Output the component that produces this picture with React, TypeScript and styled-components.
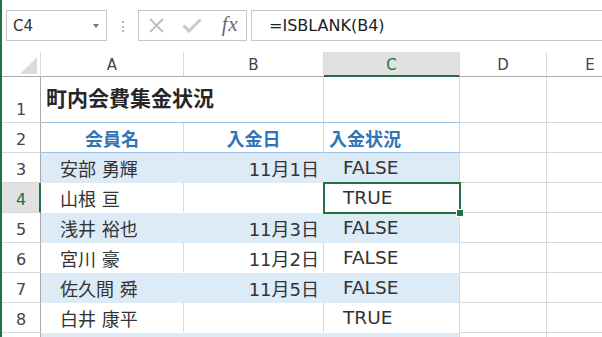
import React from 'react';
import styled, { createGlobalStyle, css } from 'styled-components';

const GlobalStyle = createGlobalStyle`
  html, body {
    margin: 0;
    padding: 0;
    background: #fff;
  }
  body {
    font-family: 'DejaVu Sans', 'Noto Sans CJK JP', sans-serif;
  }
`;

const GREEN = '#217346';
const GRID = '#d9d9d9';
const HEAD_LINE = '#ababab';
const BAND = '#ddebf7';
const BLUE_LINE = '#9bc2e6';

const Window = styled.div`
  width: 600px;
  height: 337px;
  overflow: hidden;
  border-left: 2px solid ${GREEN};
  background: #fff;
`;

const FormulaBar = styled.div`
  display: flex;
  align-items: flex-start;
  height: 52px;
  box-sizing: border-box;
  padding: 10px 0 0 4px;
`;

const NameBox = styled.div`
  width: 101px;
  height: 31px;
  box-sizing: border-box;
  border: 1px solid #c6c6c6;
  display: flex;
  align-items: center;
  justify-content: space-between;
  padding: 0 7px 0 6px;
  font-size: 15px;
  color: #333;
`;

const DropArrow = styled.span`
  width: 0;
  height: 0;
  border-left: 3.5px solid transparent;
  border-right: 3.5px solid transparent;
  border-top: 4px solid #777;
  margin-top: 1px;
`;

const Grip = styled.div`
  display: flex;
  flex-direction: column;
  gap: 2.5px;
  margin: 11px 14px 0 15px;
`;

const GripDot = styled.span`
  width: 2px;
  height: 2px;
  background: #b4b4b4;
`;

const FxBox = styled.div`
  width: 109px;
  height: 31px;
  box-sizing: border-box;
  border: 1px solid #c6c6c6;
  display: flex;
  align-items: center;
  padding: 0 8px 0 9px;
  gap: 17px;
`;

const FxLabel = styled.span`
  font-family: 'Liberation Serif', 'DejaVu Serif', serif;
  font-style: italic;
  font-size: 21px;
  color: #6a6a6a;
  margin-left: auto;
  letter-spacing: 0.5px;
  line-height: 1;
  margin-top: -2px;
`;

const FormulaInput = styled.div`
  flex: 1;
  height: 31px;
  box-sizing: border-box;
  border: 1px solid #c6c6c6;
  border-right: none;
  margin-left: 4px;
  display: flex;
  align-items: center;
  padding-left: 17px;
  font-size: 16px;
  color: #222;
`;

const Sheet = styled.div`
  display: grid;
  grid-template-columns: 39px 143px 140px 136px 87px 87px;
  grid-template-rows: 25px 46px repeat(9, 30px);
`;

const Corner = styled.div`
  box-sizing: border-box;
  border-right: 1px solid ${GRID};
  border-bottom: 1px solid ${HEAD_LINE};
  display: flex;
  align-items: flex-end;
  justify-content: flex-end;
  padding: 0 3px 2px 0;
`;

const CornerTriangle = styled.span`
  width: 0;
  height: 0;
  border-left: 17px solid transparent;
  border-bottom: 17px solid #dcdcdc;
`;

const ColHead = styled.div<{ $selected?: boolean }>`
  box-sizing: border-box;
  display: flex;
  align-items: center;
  justify-content: center;
  font-size: 15px;
  color: #444;
  border-right: 1px solid ${GRID};
  border-bottom: 1px solid ${HEAD_LINE};
  padding-top: 1px;
  ${(p) =>
    p.$selected &&
    css`
      background: #e1e1e1;
      color: ${GREEN};
      border-bottom: 2px solid ${GREEN};
      padding-top: 2px;
    `}
`;

const RowHead = styled.div<{ $selected?: boolean }>`
  box-sizing: border-box;
  display: flex;
  align-items: flex-end;
  justify-content: center;
  padding-bottom: 3px;
  font-size: 16px;
  color: #444;
  border-right: 1px solid ${HEAD_LINE};
  border-bottom: 1px solid ${GRID};
  ${(p) =>
    p.$selected &&
    css`
      background: #e1e1e1;
      color: ${GREEN};
      border-right: 2px solid ${GREEN};
      padding-left: 1px;
    `}
`;

type HLine = 'grid' | 'blue' | 'none';

const Cell = styled.div<{
  $band?: boolean;
  $vline?: boolean;
  $hline?: HLine;
  $align?: 'left' | 'center' | 'right';
  $span?: number;
}>`
  position: relative;
  box-sizing: border-box;
  display: flex;
  align-items: center;
  font-size: 18px;
  color: #333;
  white-space: nowrap;
  background: ${(p) => (p.$band ? BAND : '#fff')};
  border-right: 1px solid ${(p) => (p.$vline === false ? 'transparent' : GRID)};
  border-bottom: 1px solid
    ${(p) =>
      p.$hline === 'blue' ? BLUE_LINE : p.$hline === 'none' ? 'transparent' : GRID};
  justify-content: ${(p) =>
    p.$align === 'right' ? 'flex-end' : p.$align === 'center' ? 'center' : 'flex-start'};
  ${(p) => p.$span && css`grid-column: span ${p.$span};`}
`;

const Title = styled.span`
  font-size: 21px;
  font-weight: 700;
  color: #262626;
  padding: 0 0 6px 5px;
`;

const HeadText = styled.span<{ $pad?: number }>`
  font-weight: 700;
  color: #2f75b5;
  padding-left: ${(p) => p.$pad ?? 0}px;
`;

const NameText = styled.span`
  padding-left: 19px;
`;

const DateText = styled.span`
  padding-right: 4px;
`;

const StatusText = styled.span`
  padding-left: 19px;
  font-size: 18.5px;
`;

const Selection = styled.div`
  position: absolute;
  left: -1px;
  top: -1px;
  right: -2px;
  bottom: -2px;
  border: 2px solid ${GREEN};
  z-index: 2;
  pointer-events: none;
`;

const FillHandle = styled.span`
  position: absolute;
  right: -5px;
  bottom: -5px;
  width: 6px;
  height: 6px;
  background: ${GREEN};
  border: 1px solid #fff;
`;

const CrossIcon = () => (
  <svg width="17" height="15" viewBox="0 0 17 15">
    <path d="M2 1 L15 14 M15 1 L2 14" stroke="#bdbdbd" strokeWidth="1.8" fill="none" />
  </svg>
);

const CheckIcon = () => (
  <svg width="20" height="15" viewBox="0 0 20 15">
    <path d="M1.5 7.5 L7 13 L18.5 1.5" stroke="#c9c9c9" strokeWidth="3" fill="none" />
  </svg>
);

const columns = ['A', 'B', 'C', 'D', 'E'];

const members = [
  { name: '安部 勇輝', date: '11月1日', status: 'FALSE' },
  { name: '山根 亘', date: '', status: 'TRUE' },
  { name: '浅井 裕也', date: '11月3日', status: 'FALSE' },
  { name: '宮川 豪', date: '11月2日', status: 'FALSE' },
  { name: '佐久間 舜', date: '11月5日', status: 'FALSE' },
  { name: '白井 康平', date: '', status: 'TRUE' },
];

function App() {
  return (
    <>
      <GlobalStyle />
      <Window>
        <FormulaBar>
          <NameBox>
            <span>C4</span>
            <DropArrow />
          </NameBox>
          <Grip>
            <GripDot />
            <GripDot />
            <GripDot />
          </Grip>
          <FxBox>
            <CrossIcon />
            <CheckIcon />
            <FxLabel>fx</FxLabel>
          </FxBox>
          <FormulaInput>=ISBLANK(B4)</FormulaInput>
        </FormulaBar>

        <Sheet>
          <Corner>
            <CornerTriangle />
          </Corner>
          {columns.map((c) => (
            <ColHead key={c} $selected={c === 'C'}>
              {c}
            </ColHead>
          ))}

          <RowHead>1</RowHead>
          <Cell $span={2} $hline="blue">
            <Title>町内会費集金状況</Title>
          </Cell>
          <Cell $hline="blue" />
          <Cell />
          <Cell />

          <RowHead>2</RowHead>
          <Cell $align="center" $hline="blue">
            <HeadText>会員名</HeadText>
          </Cell>
          <Cell $align="center" $hline="blue">
            <HeadText>入金日</HeadText>
          </Cell>
          <Cell $hline="blue">
            <HeadText $pad={5}>入金状況</HeadText>
          </Cell>
          <Cell />
          <Cell />

          {members.map((m, i) => {
            const row = i + 3;
            const band = i % 2 === 0;
            return (
              <React.Fragment key={row}>
                <RowHead $selected={row === 4}>{row}</RowHead>
                <Cell $band={band} $vline={!band} $hline="none">
                  <NameText>{m.name}</NameText>
                </Cell>
                <Cell $band={band} $vline={!band} $hline="none" $align="right">
                  <DateText>{m.date}</DateText>
                </Cell>
                <Cell $band={band} $hline="none" style={row === 4 ? { zIndex: 1 } : undefined}>
                  <StatusText>{m.status}</StatusText>
                  {row === 4 && (
                    <Selection>
                      <FillHandle />
                    </Selection>
                  )}
                </Cell>
                <Cell />
                <Cell />
              </React.Fragment>
            );
          })}

          {/* row 9 is only a sliver at the bottom edge */}
          <RowHead />
          <Cell $band $vline={false} $hline="none" />
          <Cell $band $vline={false} $hline="none" />
          <Cell $band $hline="none" />
          <Cell />
          <Cell />
        </Sheet>
      </Window>
    </>
  );
}

export default App;
